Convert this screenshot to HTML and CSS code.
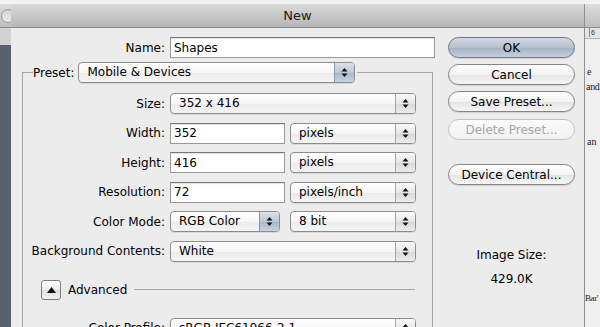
FILE: index.html
```html
<!DOCTYPE html>
<html>
<head>
    <title>New</title>
    <link rel="stylesheet" href="styles.css">
</head>
<body>
<div class="screen">
    <div class="menu-strip"></div>
    <div class="workspace">

        <!-- window behind, left side -->
        <div class="back-win">
            <div class="back-title"><span class="win-btn"></span></div>
            <div class="back-toolbar"></div>
            <div class="back-body"></div>
        </div>

        <!-- New document dialog -->
        <div class="dialog">
            <div class="dialog-title">New</div>
            <div class="dialog-body">
                <div class="main">
                    <div class="name-row">
                        <label class="lbl name-lbl">Name:</label>
                        <input class="field w265" type="text" value="Shapes">
                    </div>

                    <fieldset class="preset-box">
                        <legend>
                            <span>Preset:</span>
                            <div class="popup w277">
                                <span class="popup-text">Mobile &amp; Devices</span>
                                <span class="stepper focus"><svg width="7" height="11" viewBox="0 0 7 11"><polygon points="3.5,1 6.5,4.5 0.5,4.5"/><polygon points="0.5,6.5 6.5,6.5 3.5,10"/></svg></span>
                            </div>
                        </legend>

                        <div class="form-grid">
                            <span class="lbl">Size:</span>
                            <div class="popup">
                                <span class="popup-text">352 x 416</span>
                                <span class="stepper"><svg width="7" height="11" viewBox="0 0 7 11"><polygon points="3.5,1 6.5,4.5 0.5,4.5"/><polygon points="0.5,6.5 6.5,6.5 3.5,10"/></svg></span>
                            </div>

                            <span class="lbl">Width:</span>
                            <div class="pair">
                                <input class="field w115" type="text" value="352">
                                <div class="popup w126">
                                    <span class="popup-text">pixels</span>
                                    <span class="stepper"><svg width="7" height="11" viewBox="0 0 7 11"><polygon points="3.5,1 6.5,4.5 0.5,4.5"/><polygon points="0.5,6.5 6.5,6.5 3.5,10"/></svg></span>
                                </div>
                            </div>

                            <span class="lbl">Height:</span>
                            <div class="pair">
                                <input class="field w115" type="text" value="416">
                                <div class="popup w126">
                                    <span class="popup-text">pixels</span>
                                    <span class="stepper"><svg width="7" height="11" viewBox="0 0 7 11"><polygon points="3.5,1 6.5,4.5 0.5,4.5"/><polygon points="0.5,6.5 6.5,6.5 3.5,10"/></svg></span>
                                </div>
                            </div>

                            <span class="lbl">Resolution:</span>
                            <div class="pair">
                                <input class="field w115" type="text" value="72">
                                <div class="popup w126">
                                    <span class="popup-text">pixels/inch</span>
                                    <span class="stepper"><svg width="7" height="11" viewBox="0 0 7 11"><polygon points="3.5,1 6.5,4.5 0.5,4.5"/><polygon points="0.5,6.5 6.5,6.5 3.5,10"/></svg></span>
                                </div>
                            </div>

                            <span class="lbl">Color Mode:</span>
                            <div class="pair wide-gap">
                                <div class="popup w110">
                                    <span class="popup-text">RGB Color</span>
                                    <span class="stepper focus"><svg width="7" height="11" viewBox="0 0 7 11"><polygon points="3.5,1 6.5,4.5 0.5,4.5"/><polygon points="0.5,6.5 6.5,6.5 3.5,10"/></svg></span>
                                </div>
                                <div class="popup w126">
                                    <span class="popup-text">8 bit</span>
                                    <span class="stepper"><svg width="7" height="11" viewBox="0 0 7 11"><polygon points="3.5,1 6.5,4.5 0.5,4.5"/><polygon points="0.5,6.5 6.5,6.5 3.5,10"/></svg></span>
                                </div>
                            </div>

                            <span class="lbl">Background Contents:</span>
                            <div class="popup">
                                <span class="popup-text">White</span>
                                <span class="stepper"><svg width="7" height="11" viewBox="0 0 7 11"><polygon points="3.5,1 6.5,4.5 0.5,4.5"/><polygon points="0.5,6.5 6.5,6.5 3.5,10"/></svg></span>
                            </div>
                        </div>

                        <div class="advanced">
                            <span class="disclosure"><svg width="9" height="6" viewBox="0 0 9 6"><polygon points="4.5,0 9,6 0,6"/></svg></span>
                            <span>Advanced</span>
                            <span class="rule"></span>
                        </div>

                        <div class="form-grid profile">
                            <span class="lbl">Color Profile:</span>
                            <div class="popup">
                                <span class="popup-text">sRGB IEC61966-2.1</span>
                                <span class="stepper"><svg width="7" height="11" viewBox="0 0 7 11"><polygon points="3.5,1 6.5,4.5 0.5,4.5"/><polygon points="0.5,6.5 6.5,6.5 3.5,10"/></svg></span>
                            </div>
                        </div>
                    </fieldset>
                </div>

                <div class="side">
                    <button class="btn default">OK</button>
                    <button class="btn">Cancel</button>
                    <button class="btn">Save Preset...</button>
                    <button class="btn" disabled>Delete Preset...</button>
                    <button class="btn device">Device Central...</button>
                    <div class="size-info">
                        <div>Image Size:</div>
                        <div class="size-value">429.0K</div>
                    </div>
                </div>
            </div>
        </div>

        <!-- document window behind, right side -->
        <div class="doc">
            <div class="back-title"></div>
            <div class="ruler"><span class="tick">6</span></div>
            <div class="doc-text">
                <div class="l1">e</div>
                <div class="l2">and</div>
                <div class="l3">an</div>
                <div class="l4">Bar'</div>
            </div>
        </div>
    </div>
</div>
</body>
</html>
```

FILE: styles.css
```css
body { margin: 0; font-family: "DejaVu Sans", Verdana, sans-serif; font-size: 12px; color: #000; }
.screen { width: 600px; height: 327px; overflow: hidden; display: flex; flex-direction: column; background: #ececec; }
.menu-strip { height: 4px; background: #f3f3f3; }
.workspace { flex: 1; display: flex; min-height: 0; }

/* windows behind the dialog */
.back-win { width: 11px; display: flex; flex-direction: column; overflow: hidden; }
.back-title { height: 23px; flex: none; background: linear-gradient(#dedede, #bdbdbd); border-bottom: 1px solid #8e8e8e; }
.win-btn { display: block; width: 14px; height: 14px; margin: 5px 0 0 1px; border-radius: 50%;
           border: 1px solid #9a9a9a; background: linear-gradient(#cfcfcf, #eeeeee); box-sizing: border-box; }
.back-toolbar { height: 17px; background: #d2d2d2; }
.back-body { flex: 1; background: #56616d; }

.doc { flex: 1; display: flex; flex-direction: column; overflow: hidden; background: #efefef; }
.ruler { height: 10px; background: #e4e4e4; border-bottom: 1px solid #b5b5b5; font-family: "Liberation Sans", sans-serif; font-size: 7px; line-height: 9px; color: #333; }
.tick { display: inline-block; margin-left: 4px; padding-left: 1px; border-left: 1px solid #888; }
.doc-text { font-family: "Liberation Serif", serif; font-size: 10px; line-height: 12px; color: #1a1a1a; white-space: nowrap; }
.doc-text .l1 { margin-top: 27px; padding-left: 2px; }
.doc-text .l2 { margin-top: 3px; padding-left: 1px; letter-spacing: -0.3px; }
.doc-text .l3 { margin-top: 43px; padding-left: 2px; }
.doc-text .l4 { margin-top: 144px; font-size: 9px; letter-spacing: -0.4px; }

/* dialog */
.dialog { box-sizing: border-box; width: 574px; flex: none; display: flex; flex-direction: column; border-right: 1px solid #8f8f8f; }
.dialog-title { height: 23px; line-height: 23px; text-align: center; font-size: 13px; color: #1a1a1a;
                background: linear-gradient(#dadada, #b6b6b6); border-bottom: 1px solid #8a8a8a; }
.dialog-body { flex: 1; display: flex; overflow: hidden; background: #ececec; }
.main { width: 426px; flex: none; padding-top: 9px; }
.side { width: 127px; margin-left: 11px; padding-top: 9px; display: flex; flex-direction: column; }

.lbl { text-align: right; white-space: nowrap; }
.name-row { display: flex; align-items: center; height: 21px; gap: 5px; }
.name-lbl { width: 154px; }

.field { box-sizing: border-box; height: 21px; padding: 0 3px; margin: 0; font: inherit; color: #000; background: #fff;
         border: 1px solid #999; border-top-color: #777; box-shadow: inset 0 1px 1px rgba(0,0,0,0.12); outline: none; }
.w265 { width: 265px; }
.w115 { width: 115px; }

.popup { box-sizing: border-box; height: 21px; display: flex; border: 1px solid #8c8c8c; border-radius: 4px; overflow: hidden;
         background: linear-gradient(#ffffff, #f6f6f6 50%, #ebebeb 51%, #f4f4f4); box-shadow: 0 1px 0 rgba(0,0,0,0.08); }
.popup-text { flex: 1; padding-left: 8px; line-height: 19px; white-space: nowrap; }
.stepper { width: 19px; display: flex; align-items: center; justify-content: center; border-left: 1px solid #a5a5a5;
           background: linear-gradient(#fafafa, #e6e6e6 50%, #d8d8d8 51%, #ececec); }
.stepper.focus { background: linear-gradient(#dbe2ea, #bcc8d5 50%, #a9b8c8 51%, #c6d2de); border-left-color: #8795a5; }
.stepper svg { fill: #111; }
.w277 { width: 277px; }
.w126 { width: 126px; }
.w110 { width: 110px; }

.preset-box { box-sizing: border-box; width: 411px; margin: 4px 0 0 11px; padding: 10px 0 0 0; min-width: 0;
              border: 1px solid #a4a4a4; border-bottom: none; }
.preset-box legend { display: flex; align-items: center; gap: 4px; margin-left: 10px; padding: 0 2px 0 0; }

.form-grid { display: grid; grid-template-columns: 142px 246px; grid-auto-rows: 21px; column-gap: 5px; row-gap: 8.5px; align-items: center; }
.pair { display: flex; gap: 5px; }
.pair.wide-gap { gap: 10px; }
.profile { margin-top: 18px; }

.advanced { display: flex; align-items: center; gap: 7px; height: 20px; margin: 18px 17px 0 18px; }
.disclosure { box-sizing: border-box; width: 20px; height: 20px; display: flex; align-items: center; justify-content: center;
              border: 1px solid #7c7c7c; border-radius: 3px; background: linear-gradient(#ffffff, #ececec 50%, #dedede 51%, #f2f2f2); }
.disclosure svg { fill: #111; }
.rule { flex: 1; height: 1px; background: #a8a8a8; }

/* push buttons */
.btn { box-sizing: border-box; height: 21px; padding: 0; margin: 6px 0 0 0; font: inherit; color: #000; border: 1px solid #858585;
       border-radius: 11px; background: linear-gradient(#ffffff, #f3f3f3 50%, #e4e4e4 51%, #f6f6f6); box-shadow: 0 1px 1px rgba(0,0,0,0.12); }
.btn:first-child { margin-top: 0; }
.btn.default { background: linear-gradient(#d2d9e1, #b6c1cd 50%, #a4b1c0 51%, #c6d0db); border-color: #6f7883; }
.btn[disabled] { color: #a6a6a6; border-color: #c2c2c2; margin-top: 7px; background: linear-gradient(#fbfbfb, #f1f1f1); box-shadow: none; }
.btn.device { margin-top: 24px; }

.size-info { margin-top: 63px; text-align: center; line-height: 15px; }
.size-value { margin-top: 9px; }
```
